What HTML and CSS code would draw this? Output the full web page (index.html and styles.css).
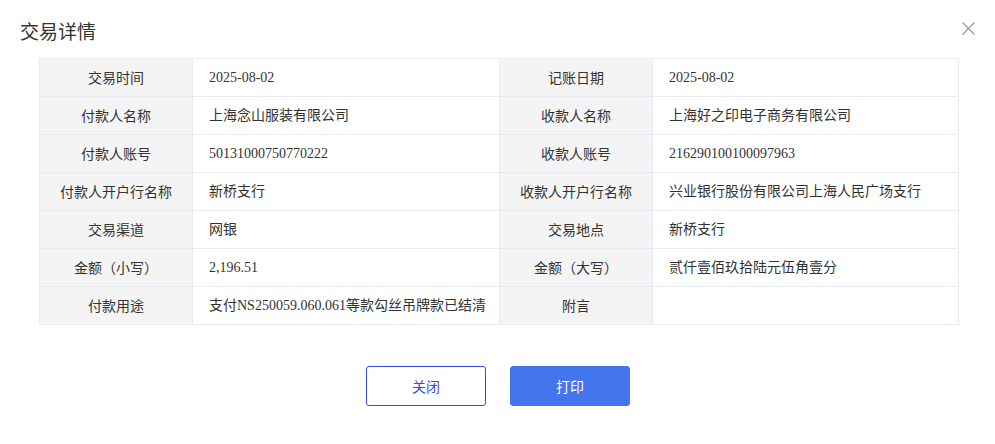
FILE: index.html
```html
<!DOCTYPE html>
<html lang="zh-CN">
<head>
<meta charset="utf-8">
<title>交易详情</title>
<link rel="stylesheet" href="styles.css">
</head>
<body>
<div class="dialog">
  <div class="header">
    <h1 class="title">交易详情</h1>
    <button class="close" aria-label="关闭">
      <svg width="13" height="13" viewBox="0 0 13 13"><path d="M0.5 0.5L12.5 12.5M12.5 0.5L0.5 12.5" stroke="#9a9a9a" stroke-width="1.2" fill="none"/></svg>
    </button>
  </div>
  <table class="detail">
    <colgroup><col class="c-label"><col class="c-value"><col class="c-label"><col class="c-value2"></colgroup>
    <tr><th>交易时间</th><td>2025-08-02</td><th>记账日期</th><td>2025-08-02</td></tr>
    <tr><th>付款人名称</th><td>上海念山服装有限公司</td><th>收款人名称</th><td>上海好之印电子商务有限公司</td></tr>
    <tr><th>付款人账号</th><td>50131000750770222</td><th>收款人账号</th><td>216290100100097963</td></tr>
    <tr><th>付款人开户行名称</th><td>新桥支行</td><th>收款人开户行名称</th><td>兴业银行股份有限公司上海人民广场支行</td></tr>
    <tr><th>交易渠道</th><td>网银</td><th>交易地点</th><td>新桥支行</td></tr>
    <tr><th>金额（小写）</th><td>2,196.51</td><th>金额（大写）</th><td>贰仟壹佰玖拾陆元伍角壹分</td></tr>
    <tr><th>付款用途</th><td>支付NS250059.060.061等款勾丝吊牌款已结清</td><th>附言</th><td></td></tr>
  </table>
  <div class="actions">
    <button class="btn btn-default">关闭</button>
    <button class="btn btn-primary">打印</button>
  </div>
</div>
</body>
</html>
```
FILE: styles.css
```css
* { box-sizing: border-box; }
html, body { margin: 0; padding: 0; background: #fff; }
body {
  font-family: "Noto Sans CJK SC", "Noto Sans", sans-serif;
  color: #333;
  width: 995px;
  height: 444px;
  overflow: hidden;
}
.dialog { padding: 0; }
.header {
  height: 58px;
  padding: 19px 20px 0 20px;
  display: flex;
  justify-content: space-between;
  align-items: flex-start;
}
.title {
  margin: 0;
  font-size: 19px;
  line-height: 24px;
  font-weight: 400;
  color: #333;
}
.close {
  border: none;
  background: none;
  padding: 0;
  margin: 3px 0 0 0;
  width: 13px;
  height: 13px;
  display: flex;
  cursor: pointer;
}
.detail {
  margin-left: 39px;
  width: 919px;
  border-collapse: collapse;
  table-layout: fixed;
  font-size: 14px;
}
.c-label { width: 153px; }
.c-value { width: 307px; }
.c-value2 { width: 306px; }
.detail th, .detail td {
  border: 1px solid #e7e9f4;
  height: 38px;
  padding: 0;
  line-height: 20px;
  font-weight: 400;
  color: #333;
  white-space: nowrap;
  vertical-align: middle;
}
.detail th {
  background: #f4f4f5;
  text-align: center;
  padding-bottom: 2px;
}
.detail td {
  text-align: left;
  padding-left: 16px;
  font-family: "Liberation Serif", "Noto Sans CJK SC", serif;
}
.actions {
  display: flex;
  justify-content: center;
  gap: 24px;
  margin-top: 41px;
  padding-left: 1px;
}
.btn {
  width: 120px;
  height: 40px;
  border-radius: 3px;
  font-family: "Noto Sans CJK SC", sans-serif;
  font-size: 14px;
  cursor: pointer;
}
.btn-default {
  background: #fff;
  border: 1px solid #3b48ee;
  color: #3b48ee;
}
.btn-primary {
  background: #4375ec;
  border: 1px solid #4375ec;
  color: #fff;
}
```
